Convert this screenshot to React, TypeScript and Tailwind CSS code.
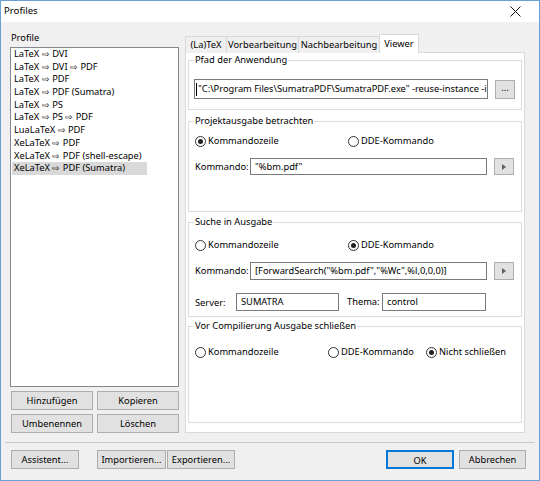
import React from 'react';

const profiles = [
  'LaTeX ⇨ DVI',
  'LaTeX ⇨ DVI ⇨ PDF',
  'LaTeX ⇨ PDF',
  'LaTeX ⇨ PDF (Sumatra)',
  'LaTeX ⇨ PS',
  'LaTeX ⇨ PS ⇨ PDF',
  'LuaLaTeX ⇨ PDF',
  'XeLaTeX ⇨ PDF',
  'XeLaTeX ⇨ PDF (shell-escape)',
  'XeLaTeX ⇨ PDF (Sumatra)',
];

const tabs = [
  { label: '(La)TeX', w: 'w-[42px]' },
  { label: 'Vorbearbeitung', w: 'w-[73px]' },
  { label: 'Nachbearbeitung', w: 'w-[82px]' },
];

function Btn({ children, className = '' }: { children: React.ReactNode; className?: string }) {
  return (
    <button className={`h-[19px] bg-[#e1e1e1] border border-[#adadad] text-center leading-[17px] ${className}`}>
      {children}
    </button>
  );
}

function Radio({ label, checked = false, className = '' }: { label: string; checked?: boolean; className?: string }) {
  return (
    <div className={`flex items-center gap-[2px] h-[14px] ${className}`}>
      <span className="w-[11px] h-[11px] shrink-0 rounded-full border border-[#333] bg-white flex items-center justify-center">
        {checked && <span className="w-[5px] h-[5px] rounded-full bg-[#222]" />}
      </span>
      <span>{label}</span>
    </div>
  );
}

function Field({ children, className = '' }: { children?: React.ReactNode; className?: string }) {
  return (
    <div className={`bg-white border border-[#7a7a7a] flex items-center px-[4px] overflow-hidden ${className}`}>
      {children}
    </div>
  );
}

function SmallBtn({ children, className = '' }: { children: React.ReactNode; className?: string }) {
  return (
    <div className={`w-[20px] bg-[#e1e1e1] border border-[#adadad] flex items-center justify-center ${className}`}>
      {children}
    </div>
  );
}

function Arrow() {
  return (
    <svg width="4" height="6" viewBox="0 0 4 6">
      <path d="M0 0 L4 3 L0 6 Z" fill="#606060" />
    </svg>
  );
}

export default function App() {
  return (
    <div className="w-[540px] h-[481px] border border-[#6ca0d4] bg-[#f0f0f0] flex flex-col font-['Noto_Sans',sans-serif] text-[9.3px] text-black whitespace-nowrap select-none">
      {/* title bar */}
      <div className="h-[21px] bg-white flex items-center justify-between pl-[3px] pr-[18px]">
        <span className="text-[9.6px]">Profiles</span>
        <svg width="11" height="11" viewBox="0 0 11 11">
          <path d="M0.5 0.5 L10.5 10.5 M10.5 0.5 L0.5 10.5" stroke="#111" strokeWidth="1" />
        </svg>
      </div>

      <div className="flex pl-[9px] pt-[9px]">
        {/* left column */}
        <div className="w-[169px] flex flex-col">
          <div className="h-[14px] leading-[14px] pl-[1px]">Profile</div>
          <div className="mt-[2px] h-[340px] bg-white border border-[#828790] pl-[1px]">
            {profiles.map((p, i) => (
              <div key={p} className="h-[12.7px] leading-[12.7px]">
                <span className={`inline-block px-[2px] ${i === profiles.length - 1 ? 'bg-[#d9d9d9] w-[135px]' : ''}`}>{p}</span>
              </div>
            ))}
          </div>
          <div className="grid grid-cols-2 gap-x-[4px] gap-y-[4px] mt-[4px] pl-[1px]">
            <Btn>Hinzufügen</Btn>
            <Btn>Kopieren</Btn>
            <Btn>Umbenennen</Btn>
            <Btn>Löschen</Btn>
          </div>
        </div>

        {/* right column */}
        <div className="ml-[6px] w-[340px] pt-[3px] flex flex-col">
          <div className="relative z-10 flex items-end h-[19px] -mb-px">
            {tabs.map((t) => (
              <div
                key={t.label}
                className={`${t.w} h-[17px] -mr-px border border-b-0 border-[#d9d9d9] bg-[#f0f0f0] flex items-center justify-center`}
              >
                {t.label}
              </div>
            ))}
            <div className="w-[40px] h-[19px] border border-b-0 border-[#d9d9d9] bg-white flex items-center justify-center pb-[1px]">
              Viewer
            </div>
          </div>

          <div className="h-[381px] border border-[#d9d9d9] bg-white px-[2px] flex flex-col">
            <fieldset className="h-[57px] border border-[#dcdcdc]">
              <legend className="ml-[5px] px-[1px] leading-[14px]">Pfad der Anwendung</legend>
              <div className="flex items-center pl-[5px] pt-[12px]">
                <Field className="w-[294px] h-[20px] !px-[1px] border-[#5c5c5c]">
                  <span className="w-px h-[13px] shrink-0 bg-black mr-[1px]" />
                  "C:\Program Files\SumatraPDF\SumatraPDF.exe" -reuse-instance -inverse-search
                </Field>
                <SmallBtn className="ml-[7px] h-[19px] leading-none pb-[3px]">...</SmallBtn>
              </div>
            </fieldset>

            <fieldset className="mt-[4px] h-[98px] border border-[#dcdcdc]">
              <legend className="ml-[5px] px-[1px] leading-[14px]">Projektausgabe betrachten</legend>
              <div className="flex pl-[6px] pt-[6px]">
                <Radio label="Kommandozeile" checked className="w-[153px]" />
                <Radio label="DDE-Kommando" />
              </div>
              <div className="flex items-center pl-[6px] mt-[10px]">
                <span className="w-[55px]">Kommando:</span>
                <Field className="w-[237px] h-[17px]">"%bm.pdf"</Field>
                <SmallBtn className="ml-[7px] h-[17px]">
                  <Arrow />
                </SmallBtn>
              </div>
            </fieldset>

            <fieldset className="mt-[3px] h-[102px] border border-[#dcdcdc]">
              <legend className="ml-[5px] px-[1px] leading-[14px]">Suche in Ausgabe</legend>
              <div className="flex pl-[6px] pt-[9px]">
                <Radio label="Kommandozeile" className="w-[153px]" />
                <Radio label="DDE-Kommando" checked />
              </div>
              <div className="flex items-center pl-[6px] mt-[10px]">
                <span className="w-[55px]">Kommando:</span>
                <Field className="w-[237px] h-[18px]">[ForwardSearch("%bm.pdf","%Wc",%l,0,0,0)]</Field>
                <SmallBtn className="ml-[7px] h-[18px]">
                  <Arrow />
                </SmallBtn>
              </div>
              <div className="flex items-center pl-[6px] mt-[13px]">
                <span className="w-[41px] pt-[2px]">Server:</span>
                <Field className="w-[103px] h-[18px]">SUMATRA</Field>
                <span className="ml-[8px] w-[35px]">Thema:</span>
                <Field className="w-[104px] h-[18px]">control</Field>
              </div>
            </fieldset>

            <fieldset className="mt-[2px] h-[104px] border border-[#dcdcdc]">
              <legend className="ml-[5px] px-[1px] leading-[14px]">Vor Compilierung Ausgabe schließen</legend>
              <div className="flex pl-[6px] pt-[12px]">
                <Radio label="Kommandozeile" className="w-[133px]" />
                <Radio label="DDE-Kommando" className="w-[98px]" />
                <Radio label="Nicht schließen" checked />
              </div>
            </fieldset>
          </div>
        </div>
      </div>

      {/* separator */}
      <div className="mt-[9px] mx-[4px] border-t border-[#c8c8c8]" />

      {/* bottom buttons */}
      <div className="flex mt-[7px] pl-[10px] pr-[13px]">
        <Btn className="w-[68px]">Assistent...</Btn>
        <Btn className="w-[69px] ml-[18px]">Importieren...</Btn>
        <Btn className="w-[68px] ml-[1px]">Exportieren...</Btn>
        <div className="flex-1" />
        <Btn className="w-[68px] !border-[#0078d7] !border-2 leading-[15px]">OK</Btn>
        <Btn className="w-[67px] ml-[5px]">Abbrechen</Btn>
      </div>
    </div>
  );
}
